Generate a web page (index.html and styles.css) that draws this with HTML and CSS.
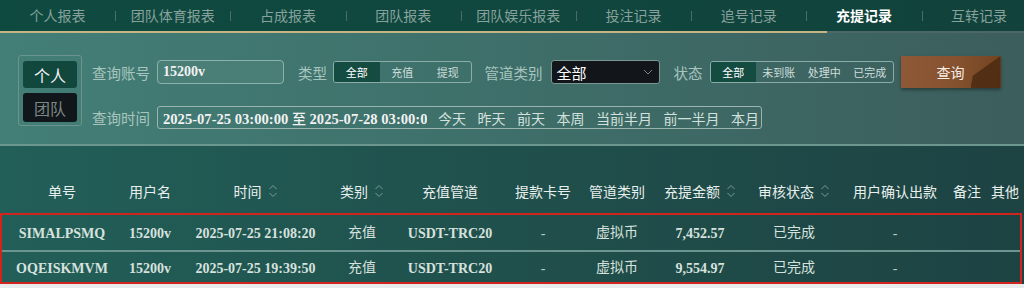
FILE: index.html
```html
<!DOCTYPE html>
<html lang="zh">
<head>
<meta charset="utf-8">
<title>充提记录</title>
<link rel="stylesheet" href="styles.css">
</head>
<body>
<div class="page">
  <nav class="tabs">
    <div class="tab">个人报表</div>
    <div class="tab">团队体育报表</div>
    <div class="tab">占成报表</div>
    <div class="tab">团队报表</div>
    <div class="tab">团队娱乐报表</div>
    <div class="tab">投注记录</div>
    <div class="tab">追号记录</div>
    <div class="tab active">充提记录</div>
    <div class="tab">互转记录</div>
  </nav>
  <div class="tabline"></div>

  <section class="filter">
    <div class="toggle">
      <div class="tg on">个人</div>
      <div class="tg off">团队</div>
    </div>
    <div class="fields">
      <div class="row1">
        <span class="lbl">查询账号</span>
        <div class="acct">15200v</div>
        <span class="lbl l-type">类型</span>
        <div class="seg seg-type">
          <span class="on">全部</span><span>充值</span><span>提现</span>
        </div>
        <span class="lbl l-pipe">管道类别</span>
        <div class="sel">
          <span>全部</span>
          <svg width="10" height="6" viewBox="0 0 10 6"><path d="M1 1 L5 5 L9 1" fill="none" stroke="#7b8289" stroke-width="1"/></svg>
        </div>
        <span class="lbl l-state">状态</span>
        <div class="seg seg-state">
          <span class="on">全部</span><span>未到账</span><span>处理中</span><span>已完成</span>
        </div>
        <div class="btn">查询</div>
      </div>
      <div class="row2">
        <span class="lbl">查询时间</span>
        <div class="datebox">
          <div class="dt">2025-07-25 03:00:00 <span class="zhi">至</span> 2025-07-28 03:00:00</div>
          <div class="quick">
            <span>今天</span><span>昨天</span><span>前天</span><span>本周</span><span>当前半月</span><span>前一半月</span><span>本月</span>
          </div>
        </div>
      </div>
    </div>
  </section>

  <section class="table">
    <div class="thead">
      <div class="th">单号</div>
      <div class="th">用户名</div>
      <div class="th">时间<svg class="sort" width="10" height="16" viewBox="0 0 10 16"><path d="M1.5 6 L5 2.5 L8.5 6 M1.5 10 L5 13.5 L8.5 10" fill="none" stroke="#7d9a95" stroke-width="1"/></svg></div>
      <div class="th">类别<svg class="sort" width="10" height="16" viewBox="0 0 10 16"><path d="M1.5 6 L5 2.5 L8.5 6 M1.5 10 L5 13.5 L8.5 10" fill="none" stroke="#7d9a95" stroke-width="1"/></svg></div>
      <div class="th">充值管道</div>
      <div class="th">提款卡号</div>
      <div class="th">管道类别</div>
      <div class="th">充提金额<svg class="sort" width="10" height="16" viewBox="0 0 10 16"><path d="M1.5 6 L5 2.5 L8.5 6 M1.5 10 L5 13.5 L8.5 10" fill="none" stroke="#7d9a95" stroke-width="1"/></svg></div>
      <div class="th">审核状态<svg class="sort" width="10" height="16" viewBox="0 0 10 16"><path d="M1.5 6 L5 2.5 L8.5 6 M1.5 10 L5 13.5 L8.5 10" fill="none" stroke="#7d9a95" stroke-width="1"/></svg></div>
      <div class="th">用户确认出款</div>
      <div class="th">备注</div>
      <div class="th">其他</div>
    </div>
    <div class="rows">
      <div class="row r1">
        <div class="td">SIMALPSMQ</div>
        <div class="td">15200v</div>
        <div class="td">2025-07-25 21:08:20</div>
        <div class="td cn">充值</div>
        <div class="td">USDT-TRC20</div>
        <div class="td dash">-</div>
        <div class="td cn">虚拟币</div>
        <div class="td">7,452.57</div>
        <div class="td cn">已完成</div>
        <div class="td dash">-</div>
        <div class="td"></div>
        <div class="td"></div>
      </div>
      <div class="row r2">
        <div class="td">OQEISKMVM</div>
        <div class="td">15200v</div>
        <div class="td">2025-07-25 19:39:50</div>
        <div class="td cn">充值</div>
        <div class="td">USDT-TRC20</div>
        <div class="td dash">-</div>
        <div class="td cn">虚拟币</div>
        <div class="td">9,554.97</div>
        <div class="td cn">已完成</div>
        <div class="td dash">-</div>
        <div class="td"></div>
        <div class="td"></div>
      </div>
    </div>
  </section>
</div>
</body>
</html>
```

FILE: styles.css
```css
html, body {
  margin: 0;
  padding: 0;
  background: #e9ecec;
}
body {
  width: 1024px;
  height: 288px;
  overflow: hidden;
  font-family: "Noto Sans CJK SC", "Noto Sans", sans-serif;
}
.page {
  width: 1024px;
}

/* Tabs */
.tabs {
  display: flex;
  height: 31px;
  overflow: hidden;
  white-space: nowrap;
  background: linear-gradient(90deg, #0f4a40 0%, #10463e 60%, #11423b 100%);
}
.tab {
  flex: 0 0 115.2px;
  position: relative;
  text-align: center;
  line-height: 31px;
  font-size: 14px;
  color: #87a29c;
}
.tab + .tab::before {
  content: "";
  position: absolute;
  left: 0;
  top: 11px;
  width: 1px;
  height: 10px;
  background: #4c6d67;
}
.tab.active {
  color: #ffffff;
  font-weight: 700;
}
.tabline {
  height: 2px;
  background: linear-gradient(90deg, #c6b584 0, #c6b584 827px, #4b6865 827px);
}

/* Filter */
.filter {
  height: 113px;
  box-sizing: border-box;
  padding: 22px 0 0 18px;
  display: flex;
  background: linear-gradient(90deg, #437f77 0%, #3f726c 40%, #3c5e5d 100%);
  border-bottom: 2px solid #6c978f;
}
.toggle {
  width: 64px;
  height: 71px;
  box-sizing: border-box;
  border: 1px solid #6a948d;
  border-radius: 3px;
  padding: 5px 4px 3px;
  display: flex;
  flex-direction: column;
  gap: 5px;
}
.tg {
  display: flex;
  align-items: center;
  justify-content: center;
  border-radius: 3px;
  font-size: 16px;
}
.tg.on {
  height: 27px;
  background: #12473e;
  color: #f3f3f3;
}
.tg.off {
  height: 29px;
  background: #11161b;
  color: #7b8785;
}
.fields {
  margin-left: 10px;
  margin-top: 1px;
  display: flex;
  flex-direction: column;
}
.row1 {
  display: flex;
  align-items: center;
  height: 32px;
}
.row2 {
  display: flex;
  align-items: center;
  height: 23px;
  margin-top: 18px;
}
.lbl {
  font-size: 14.5px;
  color: #a8c5bf;
  white-space: nowrap;
}
.acct {
  margin-left: 7px;
  width: 127px;
  height: 24px;
  box-sizing: border-box;
  border: 1px solid #8cb2ab;
  border-radius: 4px;
  background: #4a7f78;
  padding-left: 5px;
  display: flex;
  align-items: center;
  font: bold 14px "Liberation Serif", serif;
  color: #f2f2f2;
}
.l-type { margin-left: 14px; }
.l-pipe { margin-left: 13px; }
.l-state { margin-left: 14px; }
.seg {
  display: flex;
  height: 22px;
  box-sizing: border-box;
  border: 1px solid #8cada7;
  border-radius: 3px;
  overflow: hidden;
}
.seg-type { margin-left: 6px; }
.seg-state { margin-left: 7px; }
.seg span {
  width: 45.5px;
  display: flex;
  align-items: center;
  justify-content: center;
  font-size: 11px;
  color: #cddedb;
}
.seg span.on {
  background: #144c42;
  color: #ffffff;
}
.sel {
  margin-left: 8px;
  width: 109px;
  height: 24px;
  box-sizing: border-box;
  background: #12161b;
  border: 1px solid #7c9792;
  border-radius: 3px;
  padding: 0 6px 0 5px;
  display: flex;
  align-items: center;
  justify-content: space-between;
  color: #ffffff;
  font-size: 15px;
}
.btn {
  margin-left: 7px;
  width: 100px;
  height: 32px;
  position: relative;
  overflow: hidden;
  display: flex;
  align-items: center;
  justify-content: center;
  font-size: 14px;
  color: #f7ece4;
  background: linear-gradient(100deg, #8f5937 0%, #85522f 55%, #71421f 100%);
  box-shadow: 0 2px 3px rgba(0, 0, 0, 0.35);
}
.btn::after {
  content: "";
  position: absolute;
  right: 0;
  top: 0;
  width: 30px;
  height: 100%;
  background: #4b2a12;
  opacity: 0.85;
  clip-path: polygon(100% 0, 100% 100%, 0 100%, 8% 62%);
}
.datebox {
  margin-left: 7px;
  width: 605px;
  height: 23px;
  box-sizing: border-box;
  border: 1px solid #9cb4af;
  border-radius: 3px;
  display: flex;
  align-items: center;
}
.dt {
  width: 269px;
  box-sizing: border-box;
  padding-left: 5px;
  overflow: hidden;
  white-space: nowrap;
  font: bold 14.6px "Liberation Serif", serif;
  color: #f2f2f2;
}
.zhi {
  font-family: "Noto Sans CJK SC", sans-serif;
  font-weight: 500;
  font-size: 14px;
}
.quick {
  margin-left: 11px;
  display: flex;
  gap: 11.5px;
  font-size: 14px;
  color: #d3e1de;
  white-space: nowrap;
}

/* Table */
.table {
  background: linear-gradient(90deg, #225f58 0%, #20514d 45%, #1d4343 100%);
}
.thead,
.row {
  display: grid;
  grid-template-columns: 120px 56px 155px 58px 118px 68px 80px 86px 102px 100px 44px 32px;
}
.thead {
  height: 67px;
  box-sizing: border-box;
  padding: 35px 0 0 2px;
}
.th {
  display: flex;
  justify-content: center;
  align-items: center;
  gap: 6px;
  height: 20px;
  font-size: 14px;
  color: #e8efed;
  white-space: nowrap;
}
.sort {
  flex: 0 0 auto;
}
.rows {
  width: 1022px;
  box-sizing: border-box;
  border: 2px solid #d0251f;
}
.row {
  align-items: center;
}
.r1 { height: 35px; }
.r2 {
  height: 30px;
  border-top: 2px solid #6d958f;
}
.td {
  text-align: center;
  white-space: nowrap;
  height: 16px;
  margin-top: 3px;
  font: bold 14px/16px "Liberation Serif", serif;
  color: #d7e1de;
}
.td.cn {
  font: 14px/14px "Noto Sans CJK SC", sans-serif;
  height: 16px;
  margin-top: 0;
  margin-bottom: 1px;
  color: #d7e1de;
}
.td.dash {
  font-weight: normal;
  color: #b9c9c6;
}
```
